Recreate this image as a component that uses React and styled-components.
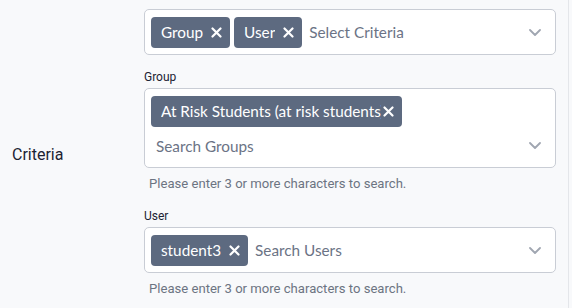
import React from "react";
import styled, { createGlobalStyle } from "styled-components";

const GlobalStyle = createGlobalStyle`
  html, body {
    margin: 0;
    padding: 0;
    background: #f8f9fb;
  }
`;

const Panel = styled.div`
  width: 569px;
  min-height: 308px;
  box-sizing: border-box;
  border-right: 1px solid #e4e6ea;
  display: flex;
  align-items: center;
`;

const RowLabel = styled.div`
  width: 144px;
  box-sizing: border-box;
  padding-left: 12px;
  font-family: Roboto, sans-serif;
  font-size: 16px;
  color: #1c2333;
`;

const Fields = styled.div`
  width: 412px;
  padding: 8px 0 10px;
  display: flex;
  flex-direction: column;
`;

const FieldLabel = styled.div`
  font-family: Roboto, sans-serif;
  font-size: 12px;
  line-height: 14px;
  color: #1c2333;
  margin: ${(p) => p.$top || "15px"} 0 4px;
`;

const Box = styled.div`
  background: #fff;
  border: 1px solid #c9cdd5;
  border-radius: 5px;
  padding: 7px 14px 6px 6px;
  display: flex;
  align-items: flex-end;
`;

const Values = styled.div`
  flex: 1;
  display: flex;
  flex-wrap: wrap;
  gap: 4px;
  align-items: center;
`;

const Chip = styled.div`
  height: 31px;
  box-sizing: border-box;
  background: #5d6a80;
  border-radius: 4px;
  color: #fff;
  font-family: Lato, sans-serif;
  font-size: 15.3px;
  display: flex;
  align-items: center;
  padding: 0 8px 0 10px;
  gap: ${(p) => (p.$tight ? "2px" : "8px")};
`;

const ChipText = styled.span`
  white-space: nowrap;
  overflow: hidden;
  max-width: ${(p) => p.$max || "none"};
`;

const Remove = styled.svg`
  width: 11px;
  height: 11px;
  flex: none;
`;

const Placeholder = styled.div`
  font-family: Lato, sans-serif;
  font-size: 15.3px;
  color: #6b7385;
  height: 30px;
  line-height: 30px;
  padding-left: ${(p) => (p.$block ? "5px" : "3px")};
  flex: ${(p) => (p.$block ? "0 0 100%" : "1")};
  box-sizing: border-box;
`;

const Chevron = styled.svg`
  width: 12px;
  height: 7px;
  flex: none;
  margin: 0 0 12px 8px;
`;

const Help = styled.div`
  font-family: Roboto, sans-serif;
  font-size: 13.1px;
  line-height: 18px;
  color: #6c7482;
  margin-top: 7px;
  padding-left: 5px;
`;

const X = () => (
  <Remove viewBox="0 0 11 11">
    <path d="M1.5 1.5 L9.5 9.5 M9.5 1.5 L1.5 9.5" stroke="#fff" strokeWidth="2.2" strokeLinecap="round" />
  </Remove>
);

const Down = () => (
  <Chevron viewBox="0 0 12 7">
    <path d="M1 1 L6 6 L11 1" fill="none" stroke="#a0a6b1" strokeWidth="1.8" strokeLinecap="round" strokeLinejoin="round" />
  </Chevron>
);

export default function App() {
  return (
    <>
      <GlobalStyle />
      <Panel>
        <RowLabel>Criteria</RowLabel>
        <Fields>
          <Box>
            <Values>
              <Chip>
                <ChipText>Group</ChipText>
                <X />
              </Chip>
              <Chip>
                <ChipText>User</ChipText>
                <X />
              </Chip>
              <Placeholder>Select Criteria</Placeholder>
            </Values>
            <Down />
          </Box>

          <FieldLabel>Group</FieldLabel>
          <Box>
            <Values>
              <Chip $tight>
                <ChipText $max="220px">At Risk Students (at risk students)</ChipText>
                <X />
              </Chip>
              <Placeholder $block>Search Groups</Placeholder>
            </Values>
            <Down />
          </Box>
          <Help>Please enter 3 or more characters to search.</Help>

          <FieldLabel $top="16px">User</FieldLabel>
          <Box>
            <Values>
              <Chip>
                <ChipText>student3</ChipText>
                <X />
              </Chip>
              <Placeholder>Search Users</Placeholder>
            </Values>
            <Down />
          </Box>
          <Help>Please enter 3 or more characters to search.</Help>
        </Fields>
      </Panel>
    </>
  );
}
